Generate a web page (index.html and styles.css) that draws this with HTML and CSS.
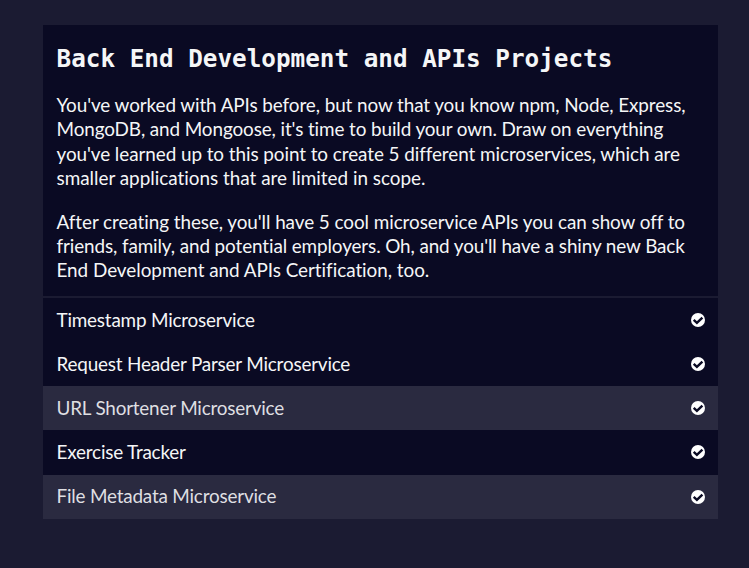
FILE: index.html
```html
<!DOCTYPE html>
<html lang="en">
<head>
<meta charset="utf-8">
<title>Back End Development and APIs Projects</title>
<link rel="stylesheet" href="styles.css">
</head>
<body>
<svg class="defs" width="0" height="0"><symbol id="check" viewBox="0 0 14 14"><circle cx="7" cy="7" r="7" fill="#fff"/><path d="M2.7 6.9 5.9 9.9 11.4 4.6" fill="none" stroke="#0a0a23" stroke-width="2.4"/></symbol></svg>
<main class="block">
<header class="intro">
<h1>Back End Development and APIs Projects</h1>
<p><span class="snug">You've worked with APIs before, but now that you know npm, Node, Express,</span><br><span class="tight">MongoDB, and Mongoose, it's time to build your own. Draw on everything</span><br><span class="normal">you've learned up to this point to create 5 different microservices, which are</span><br><span class="open">smaller applications that are limited in scope.</span></p>
<p><span class="normal">After creating these, you'll have 5 cool microservice APIs you can show off to</span><br><span class="tight">friends, family, and potential employers. Oh, and you'll have a shiny new Back</span><br><span class="loose">End Development and APIs Certification, too.</span></p>
</header>
<ul class="projects">
<li><span>Timestamp Microservice</span><svg class="icon"><use href="#check"/></svg></li>
<li><span>Request Header Parser Microservice</span><svg class="icon"><use href="#check"/></svg></li>
<li class="shaded"><span>URL Shortener Microservice</span><svg class="icon"><use href="#check"/></svg></li>
<li><span>Exercise Tracker</span><svg class="icon"><use href="#check"/></svg></li>
<li class="shaded"><span>File Metadata Microservice</span><svg class="icon"><use href="#check"/></svg></li>
</ul>
</main>
</body>
</html>
```
FILE: styles.css
```css
* { box-sizing: border-box; }
body { margin: 0; min-height: 568px; padding: 25px 31px 0 43px; background: #1b1b32; color: #f5f6f7; font: 18.9px/24.3px Lato, sans-serif; letter-spacing: -0.2px; }
.defs { display: block; }
.block { width: 675px; background: #0a0a23; }
.intro { height: 273px; padding: 19px 14px 0 13.5px; border-bottom: 2px solid #1b1b32; white-space: nowrap; }
h1 { margin: 0 0 20px; font: bold 24.3px/29px "DejaVu Sans Mono", monospace; letter-spacing: 0; }
p { margin: 0 0 19.4px; }
.tight { letter-spacing: -0.11px; }
.snug { letter-spacing: -0.095px; }
.normal { letter-spacing: -0.07px; }
.loose { letter-spacing: -0.04px; }
.open { letter-spacing: -0.01px; }
.projects { margin: 0; padding: 0; list-style: none; }
.projects li { display: flex; align-items: center; justify-content: space-between; height: 44.14px; padding: 0 13px 0 13.5px; }
.projects .shaded { background: #2a2a40; color: #dfdfe2; }
.icon { width: 14px; height: 14px; }
```
